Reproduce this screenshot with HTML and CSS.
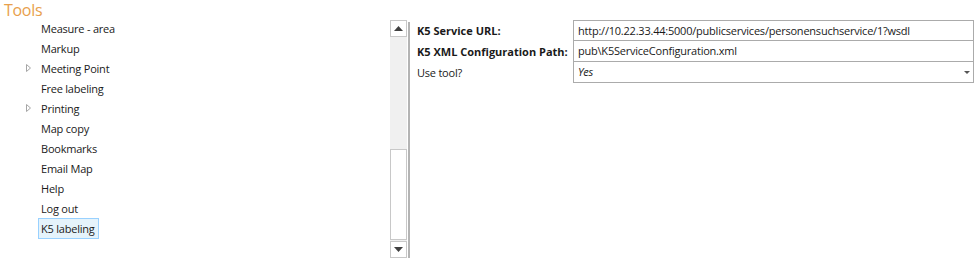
FILE: index.html
```html
<!DOCTYPE html>
<html>
<head>
<meta charset="utf-8">
<link rel="stylesheet" href="styles.css">
</head>
<body>
<div class="page">
  <div class="left">
    <div class="title">Tools</div>
    <ul class="tree">
      <li class="item"><span class="exp"></span><span class="label">Measure - area</span></li>
      <li class="item"><span class="exp"></span><span class="label">Markup</span></li>
      <li class="item"><span class="exp"><svg width="7" height="10" viewBox="0 0 7 10"><path d="M1.5 1.5 L5.5 5 L1.5 8.5 Z" fill="none" stroke="#a6a6a6" stroke-width="1"/></svg></span><span class="label">Meeting Point</span></li>
      <li class="item"><span class="exp"></span><span class="label">Free labeling</span></li>
      <li class="item"><span class="exp"><svg width="7" height="10" viewBox="0 0 7 10"><path d="M1.5 1.5 L5.5 5 L1.5 8.5 Z" fill="none" stroke="#a6a6a6" stroke-width="1"/></svg></span><span class="label">Printing</span></li>
      <li class="item"><span class="exp"></span><span class="label">Map copy</span></li>
      <li class="item"><span class="exp"></span><span class="label">Bookmarks</span></li>
      <li class="item"><span class="exp"></span><span class="label">Email Map</span></li>
      <li class="item"><span class="exp"></span><span class="label">Help</span></li>
      <li class="item"><span class="exp"></span><span class="label">Log out</span></li>
      <li class="item"><span class="exp"></span><span class="label selected">K5 labeling</span></li>
    </ul>
  </div>
  <div class="scroll">
    <div class="sbtn"><svg width="9" height="5" viewBox="0 0 9 5"><path d="M0 5 L4.5 0 L9 5 Z" fill="#404040"/></svg></div>
    <div class="track"></div>
    <div class="thumb"></div>
    <div class="sbtn"><svg width="9" height="5" viewBox="0 0 9 5"><path d="M0 0 L9 0 L4.5 5 Z" fill="#404040"/></svg></div>
  </div>
  <div class="divider"></div>
  <div class="props">
    <div class="row">
      <div class="plabel bold">K5 Service URL:</div>
      <div class="pval">http://10.22.33.44:5000/publicservices/personensuchservice/1?wsdl</div>
    </div>
    <div class="row">
      <div class="plabel bold">K5 XML Configuration Path:</div>
      <div class="pval">pub\K5ServiceConfiguration.xml</div>
    </div>
    <div class="row">
      <div class="plabel">Use tool?</div>
      <div class="pval select"><span class="ital">Yes</span><svg width="6" height="3" viewBox="0 0 6 3"><path d="M0 0 L6 0 L3 3 Z" fill="#555"/></svg></div>
    </div>
  </div>
</div>
</body>
</html>
```
FILE: styles.css
```css
html, body {
  margin: 0;
  padding: 0;
  background: #ffffff;
}
body {
  font-family: "Open Sans", "Noto Sans", sans-serif;
  font-size: 11px;
  letter-spacing: -0.22px;
  color: #1a1a1a;
}
.page {
  display: flex;
  width: 977px;
  height: 261px;
}
.left {
  width: 390px;
  flex: none;
}
.title {
  height: 18px;
  line-height: 20px;
  font-size: 16px;
  letter-spacing: -0.3px;
  color: #e8a04c;
  padding-left: 4px;
}
.tree {
  list-style: none;
  margin: 0;
  padding: 0;
}
.item {
  height: 20px;
  display: flex;
  align-items: center;
  padding-left: 25px;
}
.exp {
  width: 16px;
  height: 10px;
  display: flex;
  align-items: center;
}
.label {
  white-space: nowrap;
  line-height: 19px;
}
.selected {
  margin-left: -3px;
  padding: 0 3px 0 2px;
  background: #e5f3fb;
  border: 1px solid #99d1ff;
  line-height: 19px;
}
.scroll {
  flex: none;
  width: 17px;
  margin-top: 20px;
  height: 238px;
  display: flex;
  flex-direction: column;
  background: #f0f0f0;
}
.sbtn {
  height: 15px;
  border: 1px solid #c8c8c8;
  background: #fff;
  display: flex;
  align-items: center;
  justify-content: center;
  flex: none;
}
.track {
  height: 112px;
  flex: none;
}
.thumb {
  flex: 1;
  border: 1px solid #c8c8c8;
  background: #fff;
  margin-bottom: 1px;
}
.divider {
  flex: none;
  width: 2px;
  margin-left: 1px;
  margin-top: 22px;
  height: 236px;
  background: #b4b4b4;
}
.props {
  margin-left: 7px;
  margin-top: 20px;
  width: 557px;
  flex: none;
}
.row {
  display: flex;
  height: 21px;
}
.plabel {
  width: 156px;
  flex: none;
  line-height: 21px;
  white-space: nowrap;
}
.bold {
  font-weight: bold;
  letter-spacing: 0;
}
.pval {
  flex: 1;
  border: 1px solid #ababab;
  border-top: none;
  line-height: 20px;
  padding-left: 4px;
  white-space: nowrap;
  overflow: hidden;
}
.row:first-child .pval {
  border-top: 1px solid #ababab;
  line-height: 19px;
}
.select {
  display: flex;
  align-items: center;
  justify-content: space-between;
  padding-right: 3px;
}
.ital {
  font-style: italic;
}
```
